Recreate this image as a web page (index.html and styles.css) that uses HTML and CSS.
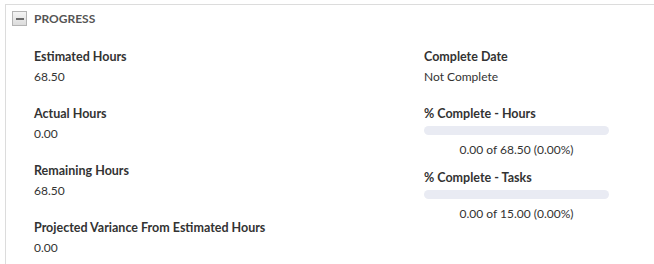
FILE: index.html
```html
<!DOCTYPE html>
<html lang="en">
<head>
    <meta charset="UTF-8">
    <title>Progress</title>
    <link rel="stylesheet" href="styles.css">
</head>
<body>
    <div class="section">
        <div class="section-header">
            <span class="toggle"><span class="minus"></span></span>
            <span class="section-title">PROGRESS</span>
        </div>
        <div class="section-body">
            <div class="col col-left">
                <div class="field">
                    <div class="label">Estimated Hours</div>
                    <div class="value">68.50</div>
                </div>
                <div class="field">
                    <div class="label">Actual Hours</div>
                    <div class="value">0.00</div>
                </div>
                <div class="field">
                    <div class="label">Remaining Hours</div>
                    <div class="value">68.50</div>
                </div>
                <div class="field">
                    <div class="label">Projected Variance From Estimated Hours</div>
                    <div class="value">0.00</div>
                </div>
            </div>
            <div class="col col-right">
                <div class="field">
                    <div class="label">Complete Date</div>
                    <div class="value">Not Complete</div>
                </div>
                <div class="field progress-field">
                    <div class="label">% Complete - Hours</div>
                    <div class="bar"><div class="bar-fill" style="width: 0%"></div></div>
                    <div class="bar-text">0.00 of 68.50 (0.00%)</div>
                </div>
                <div class="field progress-field">
                    <div class="label">% Complete - Tasks</div>
                    <div class="bar"><div class="bar-fill" style="width: 0%"></div></div>
                    <div class="bar-text">0.00 of 15.00 (0.00%)</div>
                </div>
            </div>
        </div>
    </div>
</body>
</html>
```

FILE: styles.css
```css
body {
    margin: 0;
    padding: 4px 0 0 5px;
    font-family: Lato, "Noto Sans", Arial, sans-serif;
    font-size: 12px;
    color: #333;
    background: #fff;
}
.section {
    border-top: 1px solid #dcdcdc;
    border-left: 1px solid #dcdcdc;
    height: 260px;
}
.section-header {
    display: flex;
    align-items: center;
    height: 27px;
    padding-left: 6px;
}
.toggle {
    display: flex;
    align-items: center;
    justify-content: center;
    width: 13px;
    height: 13px;
    border: 1px solid #b4b4b4;
    background: linear-gradient(#f4f4f4, #dcdcdc);
}
.minus {
    width: 8px;
    height: 2px;
    background: #6a6a6a;
}
.section-title {
    margin-left: 7px;
    font-weight: bold;
    color: #555;
}
.section-body {
    display: flex;
    padding: 17px 0 0 28px;
}
.col-left {
    width: 390px;
}
.col-right {
    width: 185px;
}
.field {
    height: 57px;
}
.label {
    font-size: 12.5px;
    font-weight: bold;
    line-height: 16px;
}
.value {
    margin-top: 4px;
    line-height: 16px;
}
.progress-field {
    height: 64px;
}
.bar {
    margin-top: 4px;
    height: 9px;
    border-radius: 5px;
    background: #e9ebf3;
    overflow: hidden;
}
.bar-fill {
    height: 100%;
    background: #4a7ebb;
}
.bar-text {
    text-align: center;
    margin-top: 7px;
    line-height: 16px;
}
```
